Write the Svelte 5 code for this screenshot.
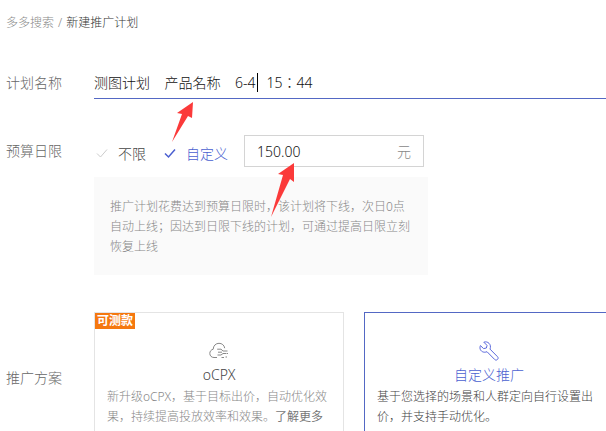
<script>
  let planName = $state('测图计划    产品名称    6-4   15：44');
  let limit = $state('custom');
  let budget = $state('150.00');
  let scheme = $state('custom');

  const limits = [
    { value: 'none', label: '不限' },
    { value: 'custom', label: '自定义' },
  ];
</script>

<div class="page">
  <nav class="breadcrumb">
    <a href="#search">多多搜索</a>
    <span>/</span>
    <span class="current">新建推广计划</span>
  </nav>

  <div class="row name-row">
    <label class="row-label" for="plan-name">计划名称</label>
    <div class="name-field">
      <input id="plan-name" type="text" bind:value={planName} />
      <span class="caret"></span>
      <svg class="arrow name-arrow" viewBox="0 0 24 42" width="24" height="42">
        <path d="M22 1 L21 17 L17 15 L1 41 L11 13 L6 12 Z" />
      </svg>
    </div>
  </div>

  <div class="row budget-row">
    <span class="row-label" id="budget-label">预算日限</span>
    <div class="budget">
      <div class="budget-controls" role="radiogroup" aria-labelledby="budget-label">
        {#each limits as item}
          <label class="option" class:active={limit === item.value}>
            <input type="radio" name="limit" value={item.value} bind:group={limit} />
            <svg viewBox="0 0 16 16" width="16" height="16">
              <path d="M3 8.5 L6.5 12 L13 4.5" />
            </svg>
            <span>{item.label}</span>
          </label>
        {/each}
        <div class="amount">
          <input type="text" aria-label="预算日限" bind:value={budget} />
          <span class="unit">元</span>
          <svg class="arrow amount-arrow" viewBox="0 0 26 56" width="26" height="56">
            <path d="M24 1 L24 20 L20 17 L1 55 L13 13 L8 12 Z" />
          </svg>
        </div>
      </div>
      <p class="hint">推广计划花费达到预算日限时，该计划将下线，次日0点自动上线；因达到日限下线的计划，可通过提高日限立刻恢复上线</p>
    </div>
  </div>

  <div class="row scheme-row">
    <span class="row-label">推广方案</span>
    <div class="cards">
      <div class="card" class:selected={scheme === 'ocpx'}>
        <span class="tag">可测款</span>
        <button type="button" onclick={() => (scheme = 'ocpx')}>
          <svg viewBox="0 0 20 20" width="20" height="20">
            <path d="M8 16.5 H5 C2.5 16.5 .8 14.8 .8 12.4 C.8 10.3 2.2 8.7 4.2 8.2 C4.3 4.7 6.8 2.3 10 2.3 C13 2.3 15.3 4.2 15.7 7.2" />
            <path d="M8.2 8.2 H12 L14 10 H18.5 M9 11.2 H13 M8.5 14 H12 L14 12.5 H17 M17.5 12.5 H19 M12.5 16.5 H15 M16.5 16 H18" />
          </svg>
          <span>oCPX</span>
        </button>
        <p>新升级oCPX，基于目标出价，自动优化效果，持续提高投放效率和效果。<a href="#more">了解更多</a></p>
      </div>
      <div class="card" class:selected={scheme === 'custom'}>
        <button type="button" onclick={() => (scheme = 'custom')}>
          <svg viewBox="0 0 20 20" width="20" height="20">
            <path d="M4.8 1.2 L8 4.4 L7.4 7 L4.6 7.6 L1.4 4.6 C.2 7.8 1.7 10.2 4.2 11 C5.6 11.4 6.9 11.2 8 10.7 L15.7 18.5 C16.5 19.3 17.6 19.3 18.4 18.5 C19.4 17.6 19.3 16.5 18.5 15.7 L11 8.1 C11.9 5.7 11.4 3.7 10 2.3 C8.6 .9 6.7 .5 4.8 1.2 Z" />
          </svg>
          <span>自定义推广</span>
        </button>
        <p>基于您选择的场景和人群定向自行设置出价，并支持手动优化。</p>
      </div>
    </div>
  </div>
</div>

<style>
  :global(body) {
    overflow: hidden;
    background: #fff;
  }

  .page {
    padding: 13px 0 0 6px;
    font-family: "Noto Sans", "Noto Sans CJK SC", sans-serif;
    font-size: 14px;
    font-weight: 300;
    color: #333;
  }

  input,
  button {
    font: inherit;
    color: inherit;
    background: none;
    border: 0;
    padding: 0;
    margin: 0;
    outline: none;
  }

  a {
    color: inherit;
    text-decoration: none;
  }

  p {
    margin: 0;
    font-size: 12px;
    line-height: 20px;
  }

  .breadcrumb {
    display: flex;
    gap: 4px;
    font-size: 12px;
    line-height: 20px;
    color: #888;
  }

  .current {
    color: #333;
  }

  .row {
    display: flex;
  }

  .row-label {
    flex: 0 0 88px;
    line-height: 32px;
    color: #666;
  }

  .name-row {
    margin-top: 34px;
  }

  .name-field {
    position: relative;
    flex: 1;
    border-bottom: 1px solid #5468c4;
  }

  .name-field input {
    display: block;
    width: 100%;
    height: 30px;
    margin-bottom: 1px;
    font-family: "Noto Sans", "Noto Sans CJK JP", sans-serif;
    color: #111;
  }

  .caret {
    position: absolute;
    left: 163px;
    top: 6px;
    width: 1px;
    height: 19px;
    background: #000;
  }

  .arrow {
    position: absolute;
    fill: #fb3a3a;
    pointer-events: none;
    z-index: 1;
  }

  .name-arrow {
    left: 77px;
    top: 34px;
  }

  .budget-row {
    margin-top: 36px;
  }

  .budget-controls {
    display: flex;
    gap: 16px;
  }

  .option {
    display: flex;
    align-items: center;
    gap: 8px;
    padding-top: 4px;
    color: #444;
  }

  .option input {
    position: absolute;
    opacity: 0;
  }

  .option svg {
    fill: none;
    stroke: #ccc;
    stroke-width: 1;
  }

  .option.active {
    color: #4a5fd0;
  }

  .option.active svg {
    stroke: #4a5fd0;
    stroke-width: 1.5;
  }

  .amount {
    position: relative;
    display: flex;
    align-items: center;
    box-sizing: border-box;
    width: 180px;
    height: 32px;
    padding: 0 12px;
    border: 1px solid #d4d4d4;
  }

  .amount input {
    flex: 1;
    min-width: 0;
    color: #111;
  }

  .unit {
    color: #888;
  }

  .amount-arrow {
    left: 25px;
    top: 26px;
  }

  .hint {
    box-sizing: border-box;
    max-width: 334px;
    margin-top: 10px;
    padding: 20px 16px 18px;
    background: #fafafa;
    color: #888;
  }

  .scheme-row {
    align-items: center;
    margin-top: 37px;
  }

  .cards {
    display: flex;
    gap: 20px;
  }

  .card {
    position: relative;
    flex: 0 0 250px;
    box-sizing: border-box;
    padding: 28px 12px 16px;
    border: 1px solid #e4e4e4;
    color: #888;
  }

  .card button {
    display: flex;
    flex-direction: column;
    align-items: center;
    gap: 4px;
    width: 100%;
    margin-bottom: 2px;
    line-height: 20px;
    color: #444;
  }

  .card svg {
    fill: none;
    stroke: #888;
    stroke-width: 1;
  }

  .card p a {
    font-weight: 400;
    color: #777;
  }

  .card.selected {
    border-color: #5468c4;
    color: #444;
  }

  .card.selected button {
    color: #4a5fd0;
  }

  .card.selected svg {
    stroke: #5a68dc;
  }

  .tag {
    position: absolute;
    left: 0;
    top: 0;
    padding: 0 2px;
    background: #f5780f;
    color: #fff;
    font-size: 12px;
    font-weight: 700;
    line-height: 16px;
  }
</style>
